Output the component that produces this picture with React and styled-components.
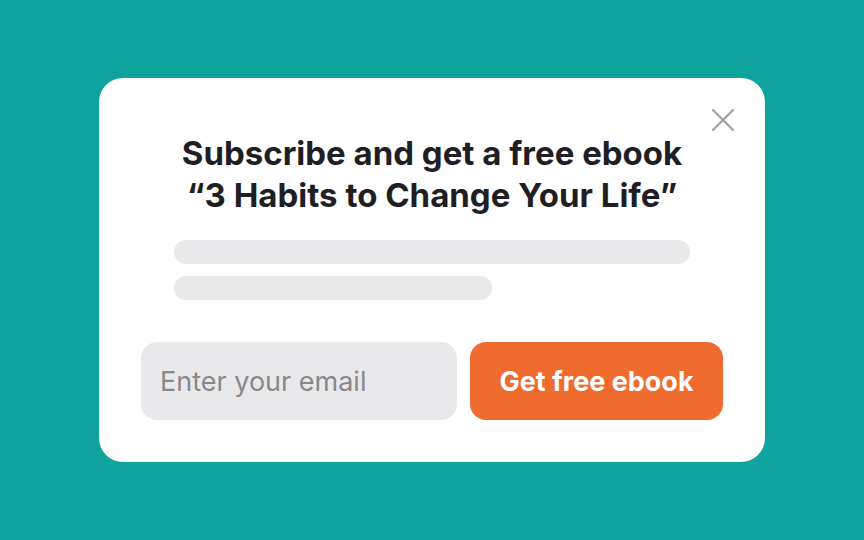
import styled, { createGlobalStyle } from 'styled-components';

const GlobalStyle = createGlobalStyle`
  html, body {
    margin: 0;
    padding: 0;
    background-color: #0fa39d;
  }
  * {
    box-sizing: border-box;
  }
`;

const Page = styled.div`
  width: 864px;
  height: 540px;
  display: flex;
  align-items: center;
  justify-content: center;
  background-color: #0fa39d;
`;

const Card = styled.div`
  position: relative;
  width: 666px;
  height: 384px;
  background-color: #ffffff;
  border-radius: 24px;
  padding: 54px 42px 42px;
  display: flex;
  flex-direction: column;
  align-items: center;
`;

const CloseButton = styled.button`
  position: absolute;
  top: 30px;
  right: 30px;
  width: 24px;
  height: 24px;
  padding: 0;
  border: none;
  background: none;
  cursor: pointer;
  display: flex;
  align-items: center;
  justify-content: center;
`;

const Title = styled.h1`
  margin: 0;
  font-family: Inter, 'Noto Sans', sans-serif;
  font-size: 33px;
  font-weight: 700;
  line-height: 42px;
  color: #1e1e24;
  text-align: center;
  white-space: nowrap;
`;

const Lines = styled.div`
  width: 516px;
  margin-top: 24px;
  display: flex;
  flex-direction: column;
  gap: 12px;
`;

const Line = styled.div`
  width: ${(p) => p.$width};
  height: 24px;
  border-radius: 12px;
  background-color: #e9e9eb;
`;

const Form = styled.form`
  width: 100%;
  margin-top: 42px;
  display: flex;
  gap: 13px;
`;

const Input = styled.input`
  width: 316px;
  height: 78px;
  border: none;
  outline: none;
  border-radius: 16px;
  background-color: #e9e9eb;
  padding: 0 19px;
  font-family: Inter, 'Noto Sans', sans-serif;
  font-size: 27px;
  color: #1e1e24;
  &::placeholder {
    color: #88888c;
  }
`;

const Button = styled.button`
  flex: 1;
  height: 78px;
  border: none;
  border-radius: 16px;
  background-color: #f06b2e;
  color: #ffffff;
  font-family: Inter, 'Noto Sans', sans-serif;
  font-size: 27px;
  font-weight: 700;
  cursor: pointer;
`;

const App = () => {
  return (
    <>
      <GlobalStyle />
      <Page>
        <Card>
          <CloseButton aria-label="Close">
            <svg width="24" height="24" viewBox="0 0 24 24" fill="none">
              <path d="M2 2L22 22M22 2L2 22" stroke="#a3a3a8" strokeWidth="2.4" strokeLinecap="round" />
            </svg>
          </CloseButton>
          <Title>
            Subscribe and get a free ebook
            <br />
            “3 Habits to Change Your Life”
          </Title>
          <Lines>
            <Line $width="100%" />
            <Line $width="318px" />
          </Lines>
          <Form onSubmit={(e) => e.preventDefault()}>
            <Input type="email" placeholder="Enter your email" />
            <Button type="submit">Get free ebook</Button>
          </Form>
        </Card>
      </Page>
    </>
  );
};

export default App;
